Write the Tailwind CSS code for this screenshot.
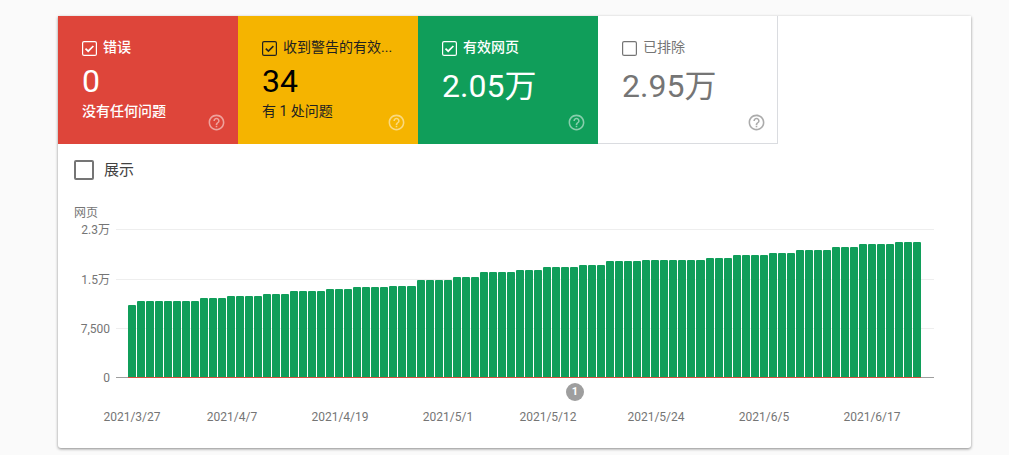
<!DOCTYPE html>
<html lang="zh-CN">
<head>
<meta charset="utf-8">
<title>覆盖范围</title>
<script src="https://cdn.jsdelivr.net/npm/@tailwindcss/browser@4"></script>
</head>
<body class="bg-[#fafafa] font-[family-name:Roboto,'Noto_Sans_CJK_SC',sans-serif]">
<div class="h-[455px] overflow-hidden pt-[16px] pl-[58px]">
  <main class="w-[913px] h-[432px] bg-white rounded-b-[3px] shadow-[0_1px_3px_rgba(0,0,0,0.45)]">
    <!-- tiles -->
    <div class="flex h-[128px]">
      <div class="relative w-[180px] bg-[#de453a] text-white pt-[25px] pl-[24px]">
        <div class="flex items-center gap-[6px] h-[15px] text-[14px] font-medium leading-[15px]">
          <svg class="w-[15px] h-[15px] shrink-0" viewBox="0 0 15 15" fill="none"><rect x=".6" y=".6" width="13.8" height="13.8" rx="1.5" stroke="currentColor" stroke-width="1.2"/><path d="M3.5 7.6l2.7 2.6 5.2-5.2" stroke="currentColor" stroke-width="1.7"/></svg>
          <span class="mb-[2px]">错误</span>
        </div>
        <div class="text-[32px] leading-[38px] mt-[6px]">0</div>
        <div class="text-[14px] font-medium leading-[18px] mt-[2px]">没有任何问题</div>
        <svg class="absolute right-[12px] bottom-[12px] w-[19px] h-[19px] opacity-50" viewBox="0 0 24 24" fill="currentColor"><path d="M11 18h2v-2h-2v2zm1-16C6.48 2 2 6.48 2 12s4.48 10 10 10 10-4.48 10-10S17.52 2 12 2zm0 18c-4.41 0-8-3.59-8-8s3.59-8 8-8 8 3.59 8 8-3.59 8-8 8zm0-14c-2.21 0-4 1.79-4 4h2c0-1.1.9-2 2-2s2 .9 2 2c0 2-3 1.75-3 5h2c0-2.25 3-2.5 3-5 0-2.21-1.79-4-4-4z"/></svg>
      </div>
      <div class="relative w-[180px] bg-[#f5b400] text-black pt-[25px] pl-[24px]">
        <div class="flex items-center gap-[6px] h-[15px] text-[14px] leading-[15px] text-[#212121]">
          <svg class="w-[15px] h-[15px] shrink-0" viewBox="0 0 15 15" fill="none"><rect x=".6" y=".6" width="13.8" height="13.8" rx="1.5" stroke="currentColor" stroke-width="1.2"/><path d="M3.8 7.6l2.6 2.5 5-5" stroke="currentColor" stroke-width="1.5"/></svg>
          <span class="mb-[2px] whitespace-nowrap">收到警告的有效...</span>
        </div>
        <div class="text-[32px] leading-[38px] mt-[6px]">34</div>
        <div class="text-[14px] leading-[18px] mt-[2px] text-[#212121]">有 1 处问题</div>
        <svg class="absolute right-[12px] bottom-[12px] w-[19px] h-[19px] text-white opacity-50" viewBox="0 0 24 24" fill="currentColor"><path d="M11 18h2v-2h-2v2zm1-16C6.48 2 2 6.48 2 12s4.48 10 10 10 10-4.48 10-10S17.52 2 12 2zm0 18c-4.41 0-8-3.59-8-8s3.59-8 8-8 8 3.59 8 8-3.59 8-8 8zm0-14c-2.21 0-4 1.79-4 4h2c0-1.1.9-2 2-2s2 .9 2 2c0 2-3 1.75-3 5h2c0-2.25 3-2.5 3-5 0-2.21-1.79-4-4-4z"/></svg>
      </div>
      <div class="relative w-[180px] bg-[#109e5a] text-white pt-[25px] pl-[24px]">
        <div class="flex items-center gap-[6px] h-[15px] text-[14px] font-medium leading-[15px]">
          <svg class="w-[15px] h-[15px] shrink-0" viewBox="0 0 15 15" fill="none"><rect x=".6" y=".6" width="13.8" height="13.8" rx="1.5" stroke="currentColor" stroke-width="1.2"/><path d="M3.5 7.6l2.7 2.6 5.2-5.2" stroke="currentColor" stroke-width="1.7"/></svg>
          <span class="mb-[2px]">有效网页</span>
        </div>
        <div class="text-[32px] leading-[38px] mt-[11px]">2.05万</div>
        <svg class="absolute right-[12px] bottom-[12px] w-[19px] h-[19px] opacity-50" viewBox="0 0 24 24" fill="currentColor"><path d="M11 18h2v-2h-2v2zm1-16C6.48 2 2 6.48 2 12s4.48 10 10 10 10-4.48 10-10S17.52 2 12 2zm0 18c-4.41 0-8-3.59-8-8s3.59-8 8-8 8 3.59 8 8-3.59 8-8 8zm0-14c-2.21 0-4 1.79-4 4h2c0-1.1.9-2 2-2s2 .9 2 2c0 2-3 1.75-3 5h2c0-2.25 3-2.5 3-5 0-2.21-1.79-4-4-4z"/></svg>
      </div>
      <div class="relative w-[180px] bg-white text-[#757575] border-r border-b border-[#dadce0] pt-[25px] pl-[24px]">
        <div class="flex items-center gap-[6px] h-[15px] text-[14px] leading-[15px]">
          <svg class="w-[15px] h-[15px] shrink-0" viewBox="0 0 15 15" fill="none"><rect x=".6" y=".6" width="13.8" height="13.8" rx="1.5" stroke="currentColor" stroke-width="1.2"/></svg>
          <span class="mb-[2px]">已排除</span>
        </div>
        <div class="text-[32px] leading-[38px] mt-[11px]">2.95万</div>
        <svg class="absolute right-[11px] bottom-[11px] w-[19px] h-[19px] opacity-60" viewBox="0 0 24 24" fill="currentColor"><path d="M11 18h2v-2h-2v2zm1-16C6.48 2 2 6.48 2 12s4.48 10 10 10 10-4.48 10-10S17.52 2 12 2zm0 18c-4.41 0-8-3.59-8-8s3.59-8 8-8 8 3.59 8 8-3.59 8-8 8zm0-14c-2.21 0-4 1.79-4 4h2c0-1.1.9-2 2-2s2 .9 2 2c0 2-3 1.75-3 5h2c0-2.25 3-2.5 3-5 0-2.21-1.79-4-4-4z"/></svg>
      </div>
    </div>

    <!-- impressions toggle -->
    <div class="flex items-center gap-[10px] pl-[16px] pt-[16px] h-[36px]">
      <span class="block w-[20px] h-[20px] border-2 border-[#757575] rounded-[2px]"></span>
      <span class="text-[15px] leading-[20px] text-[#424242]">展示</span>
    </div>

    <!-- chart -->
    <div class="pl-[16px] pt-[25px] text-[12px] text-[#757575]">
      <div class="leading-[14px] h-[14px] pt-px">网页</div>
      <div class="relative mt-[4px] ml-[-16px] w-[876px]">
        <div class="flex items-start h-[12px]"><span class="w-[52px] mt-px text-right leading-[12px]">2.3万</span><span class="ml-[6px] mt-[6px] flex-1 h-px bg-[#eeeeee]"></span></div>
        <div class="flex items-start h-[12px] mt-[38px]"><span class="w-[52px] mt-px text-right leading-[12px]">1.5万</span><span class="ml-[6px] mt-[6px] flex-1 h-px bg-[#eeeeee]"></span></div>
        <div class="flex items-start h-[12px] mt-[37px]"><span class="w-[52px] mt-px text-right leading-[12px]">7,500</span><span class="ml-[6px] mt-[6px] flex-1 h-px bg-[#eeeeee]"></span></div>
        <div class="flex items-start h-[12px] mt-[37px]"><span class="w-[52px] mt-px text-right leading-[12px]">0</span><span class="ml-[6px] mt-[6px] flex-1 h-px bg-[#9e9e9e]"></span></div>

        <!-- bars laid over the gridlines -->
        <div class="absolute left-[69.5px] w-[794px] bottom-[6px] flex items-end gap-px h-[140px]">
          <div class="flex-1 bg-[#109e5a] rounded-t-[1px]" style="height:72px"></div>
          <div class="flex-1 bg-[#109e5a] rounded-t-[1px]" style="height:76px"></div>
          <div class="flex-1 bg-[#109e5a] rounded-t-[1px]" style="height:76px"></div>
          <div class="flex-1 bg-[#109e5a] rounded-t-[1px]" style="height:76px"></div>
          <div class="flex-1 bg-[#109e5a] rounded-t-[1px]" style="height:76px"></div>
          <div class="flex-1 bg-[#109e5a] rounded-t-[1px]" style="height:76px"></div>
          <div class="flex-1 bg-[#109e5a] rounded-t-[1px]" style="height:76px"></div>
          <div class="flex-1 bg-[#109e5a] rounded-t-[1px]" style="height:76px"></div>
          <div class="flex-1 bg-[#109e5a] rounded-t-[1px]" style="height:79px"></div>
          <div class="flex-1 bg-[#109e5a] rounded-t-[1px]" style="height:79px"></div>
          <div class="flex-1 bg-[#109e5a] rounded-t-[1px]" style="height:79px"></div>
          <div class="flex-1 bg-[#109e5a] rounded-t-[1px]" style="height:81px"></div>
          <div class="flex-1 bg-[#109e5a] rounded-t-[1px]" style="height:81px"></div>
          <div class="flex-1 bg-[#109e5a] rounded-t-[1px]" style="height:81px"></div>
          <div class="flex-1 bg-[#109e5a] rounded-t-[1px]" style="height:81px"></div>
          <div class="flex-1 bg-[#109e5a] rounded-t-[1px]" style="height:83px"></div>
          <div class="flex-1 bg-[#109e5a] rounded-t-[1px]" style="height:83px"></div>
          <div class="flex-1 bg-[#109e5a] rounded-t-[1px]" style="height:83px"></div>
          <div class="flex-1 bg-[#109e5a] rounded-t-[1px]" style="height:86px"></div>
          <div class="flex-1 bg-[#109e5a] rounded-t-[1px]" style="height:86px"></div>
          <div class="flex-1 bg-[#109e5a] rounded-t-[1px]" style="height:86px"></div>
          <div class="flex-1 bg-[#109e5a] rounded-t-[1px]" style="height:86px"></div>
          <div class="flex-1 bg-[#109e5a] rounded-t-[1px]" style="height:88px"></div>
          <div class="flex-1 bg-[#109e5a] rounded-t-[1px]" style="height:88px"></div>
          <div class="flex-1 bg-[#109e5a] rounded-t-[1px]" style="height:88px"></div>
          <div class="flex-1 bg-[#109e5a] rounded-t-[1px]" style="height:90px"></div>
          <div class="flex-1 bg-[#109e5a] rounded-t-[1px]" style="height:90px"></div>
          <div class="flex-1 bg-[#109e5a] rounded-t-[1px]" style="height:90px"></div>
          <div class="flex-1 bg-[#109e5a] rounded-t-[1px]" style="height:90px"></div>
          <div class="flex-1 bg-[#109e5a] rounded-t-[1px]" style="height:91px"></div>
          <div class="flex-1 bg-[#109e5a] rounded-t-[1px]" style="height:91px"></div>
          <div class="flex-1 bg-[#109e5a] rounded-t-[1px]" style="height:91px"></div>
          <div class="flex-1 bg-[#109e5a] rounded-t-[1px]" style="height:97px"></div>
          <div class="flex-1 bg-[#109e5a] rounded-t-[1px]" style="height:97px"></div>
          <div class="flex-1 bg-[#109e5a] rounded-t-[1px]" style="height:97px"></div>
          <div class="flex-1 bg-[#109e5a] rounded-t-[1px]" style="height:97px"></div>
          <div class="flex-1 bg-[#109e5a] rounded-t-[1px]" style="height:100px"></div>
          <div class="flex-1 bg-[#109e5a] rounded-t-[1px]" style="height:100px"></div>
          <div class="flex-1 bg-[#109e5a] rounded-t-[1px]" style="height:100px"></div>
          <div class="flex-1 bg-[#109e5a] rounded-t-[1px]" style="height:105px"></div>
          <div class="flex-1 bg-[#109e5a] rounded-t-[1px]" style="height:105px"></div>
          <div class="flex-1 bg-[#109e5a] rounded-t-[1px]" style="height:105px"></div>
          <div class="flex-1 bg-[#109e5a] rounded-t-[1px]" style="height:105px"></div>
          <div class="flex-1 bg-[#109e5a] rounded-t-[1px]" style="height:107px"></div>
          <div class="flex-1 bg-[#109e5a] rounded-t-[1px]" style="height:107px"></div>
          <div class="flex-1 bg-[#109e5a] rounded-t-[1px]" style="height:107px"></div>
          <div class="flex-1 bg-[#109e5a] rounded-t-[1px]" style="height:110px"></div>
          <div class="flex-1 bg-[#109e5a] rounded-t-[1px]" style="height:110px"></div>
          <div class="flex-1 bg-[#109e5a] rounded-t-[1px]" style="height:110px"></div>
          <div class="flex-1 bg-[#109e5a] rounded-t-[1px]" style="height:110px"></div>
          <div class="flex-1 bg-[#109e5a] rounded-t-[1px]" style="height:112px"></div>
          <div class="flex-1 bg-[#109e5a] rounded-t-[1px]" style="height:112px"></div>
          <div class="flex-1 bg-[#109e5a] rounded-t-[1px]" style="height:112px"></div>
          <div class="flex-1 bg-[#109e5a] rounded-t-[1px]" style="height:116px"></div>
          <div class="flex-1 bg-[#109e5a] rounded-t-[1px]" style="height:116px"></div>
          <div class="flex-1 bg-[#109e5a] rounded-t-[1px]" style="height:116px"></div>
          <div class="flex-1 bg-[#109e5a] rounded-t-[1px]" style="height:116px"></div>
          <div class="flex-1 bg-[#109e5a] rounded-t-[1px]" style="height:117px"></div>
          <div class="flex-1 bg-[#109e5a] rounded-t-[1px]" style="height:117px"></div>
          <div class="flex-1 bg-[#109e5a] rounded-t-[1px]" style="height:117px"></div>
          <div class="flex-1 bg-[#109e5a] rounded-t-[1px]" style="height:117px"></div>
          <div class="flex-1 bg-[#109e5a] rounded-t-[1px]" style="height:117px"></div>
          <div class="flex-1 bg-[#109e5a] rounded-t-[1px]" style="height:117px"></div>
          <div class="flex-1 bg-[#109e5a] rounded-t-[1px]" style="height:117px"></div>
          <div class="flex-1 bg-[#109e5a] rounded-t-[1px]" style="height:119px"></div>
          <div class="flex-1 bg-[#109e5a] rounded-t-[1px]" style="height:119px"></div>
          <div class="flex-1 bg-[#109e5a] rounded-t-[1px]" style="height:119px"></div>
          <div class="flex-1 bg-[#109e5a] rounded-t-[1px]" style="height:122px"></div>
          <div class="flex-1 bg-[#109e5a] rounded-t-[1px]" style="height:122px"></div>
          <div class="flex-1 bg-[#109e5a] rounded-t-[1px]" style="height:122px"></div>
          <div class="flex-1 bg-[#109e5a] rounded-t-[1px]" style="height:122px"></div>
          <div class="flex-1 bg-[#109e5a] rounded-t-[1px]" style="height:124px"></div>
          <div class="flex-1 bg-[#109e5a] rounded-t-[1px]" style="height:124px"></div>
          <div class="flex-1 bg-[#109e5a] rounded-t-[1px]" style="height:124px"></div>
          <div class="flex-1 bg-[#109e5a] rounded-t-[1px]" style="height:127px"></div>
          <div class="flex-1 bg-[#109e5a] rounded-t-[1px]" style="height:127px"></div>
          <div class="flex-1 bg-[#109e5a] rounded-t-[1px]" style="height:127px"></div>
          <div class="flex-1 bg-[#109e5a] rounded-t-[1px]" style="height:127px"></div>
          <div class="flex-1 bg-[#109e5a] rounded-t-[1px]" style="height:130px"></div>
          <div class="flex-1 bg-[#109e5a] rounded-t-[1px]" style="height:130px"></div>
          <div class="flex-1 bg-[#109e5a] rounded-t-[1px]" style="height:130px"></div>
          <div class="flex-1 bg-[#109e5a] rounded-t-[1px]" style="height:133px"></div>
          <div class="flex-1 bg-[#109e5a] rounded-t-[1px]" style="height:133px"></div>
          <div class="flex-1 bg-[#109e5a] rounded-t-[1px]" style="height:133px"></div>
          <div class="flex-1 bg-[#109e5a] rounded-t-[1px]" style="height:133px"></div>
          <div class="flex-1 bg-[#109e5a] rounded-t-[1px]" style="height:135px"></div>
          <div class="flex-1 bg-[#109e5a] rounded-t-[1px]" style="height:135px"></div>
          <div class="flex-1 bg-[#109e5a] rounded-t-[1px]" style="height:135px"></div>
        </div>
        <div class="absolute left-[70px] w-[793px] bottom-[5px] h-px bg-[#d9503f]"></div>
        <!-- annotation marker -->
        <div class="absolute left-[508px] top-[160px] w-[18px] h-[18px] rounded-full bg-[#9e9e9e] text-white text-[11px] font-bold leading-[18px] text-center">1</div>
      </div>
      <div class="flex ml-[8px] mt-[27px] leading-[14px] text-center">
        <span class="w-[100px]">2021/3/27</span>
        <span class="w-[100px]">2021/4/7</span>
        <span class="w-[116px]">2021/4/19</span>
        <span class="w-[100px]">2021/5/1</span>
        <span class="w-[100px]">2021/5/12</span>
        <span class="w-[116px]">2021/5/24</span>
        <span class="w-[100px]">2021/6/5</span>
        <span class="w-[116px]">2021/6/17</span>
      </div>
    </div>
  </main>
</div>
</body>
</html>
